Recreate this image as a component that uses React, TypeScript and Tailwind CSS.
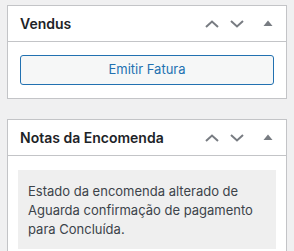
function Chevron({ up }: { up?: boolean }) {
  return (
    <svg width="14" height="8" viewBox="0 0 14 8" className="block">
      <path
        d={up ? 'M1 7 L7 1.5 L13 7' : 'M1 1 L7 6.5 L13 1'}
        fill="none"
        stroke="#787c82"
        strokeWidth="2"
      />
    </svg>
  );
}

function Triangle() {
  return (
    <svg width="10" height="6" viewBox="0 0 10 6" className="block">
      <path d="M0.5 6 L5 0.5 L9.5 6 Z" fill="#787c82" />
    </svg>
  );
}

function Header({ title }: { title: string }) {
  return (
    <div className="flex h-[36px] items-center border-b border-[#c3c4c7] pl-[12px]">
      <h2 className="flex-1 text-[14px] font-semibold text-[#1d2327]">{title}</h2>
      <div className="flex items-center pr-[13px]">
        <div className="flex w-[25px] justify-center">
          <Chevron up />
        </div>
        <div className="flex w-[25px] justify-center">
          <Chevron />
        </div>
        <div className="ml-[14px] flex w-[10px] justify-center pb-[2px]">
          <Triangle />
        </div>
      </div>
    </div>
  );
}

export default function App() {
  return (
    <div
      className="h-[251px] overflow-hidden bg-[#f0f0f1] pl-[7px] pr-[7px] pt-[5px]"
      style={{ fontFamily: 'Inter, Roboto, sans-serif' }}
    >
      <div className="w-[280px] border border-[#c3c4c7] bg-white">
        <Header title="Vendus" />
        <div className="px-[12px] pb-[13px] pt-[13px]">
          <button className="h-[30px] w-full rounded-[3px] border border-[#2271b1] bg-[#f6f7f7] text-[13px] text-[#2271b1]">
            Emitir Fatura
          </button>
        </div>
      </div>
      <div className="mt-[20px] h-[200px] w-[280px] border border-[#c3c4c7] bg-white">
        <Header title="Notas da Encomenda" />
        <div className="px-[10px] pt-[14px]">
          <div className="bg-[#efefef] px-[10px] pb-[10px] pt-[12px] text-[13px] leading-[19px] text-[#3c434a]">
            Estado da encomenda alterado de Aguarda confirmação de pagamento para Concluída.
          </div>
        </div>
      </div>
    </div>
  );
}
